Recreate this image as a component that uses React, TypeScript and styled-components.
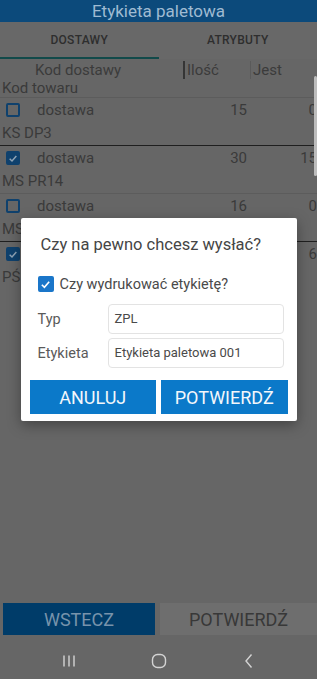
import * as React from 'react';
import styled, { createGlobalStyle } from 'styled-components';

const GlobalStyle = createGlobalStyle`
  html, body {
    margin: 0;
    padding: 0;
    background: #666666;
    font-family: Roboto, 'Noto Sans', Arial, sans-serif;
  }
  * { box-sizing: border-box; }
`;

const $Screen = styled.div`
  position: relative;
  width: 317px;
  height: 679px;
  overflow: hidden;
  display: flex;
  flex-direction: column;
  background: #666666;
  color: #3a3a3a;
`;

const $Header = styled.header`
  height: 22px;
  background: #0c4a7b;
  color: #9fbbd2;
  font-size: 17px;
  line-height: 23px;
  text-align: center;
`;

const $Tabs = styled.nav`
  display: flex;
  height: 37px;
  background: #686868;
`;

const $Tab = styled.div<{ $active?: boolean }>`
  flex: 1;
  display: flex;
  align-items: center;
  justify-content: center;
  font-size: 12px;
  font-weight: 500;
  letter-spacing: 0.3px;
  color: #2e2e2e;
  border-bottom: 2px solid ${({ $active }) => ($active ? '#124a4a' : 'transparent')};
  padding-top: 1px;
`;

const $ColumnHeader = styled.div`
  display: grid;
  grid-template-columns: 35px 148px 67px 1fr;
  height: 21px;
  align-items: center;
  font-size: 15px;
  color: #3b3b3b;
`;

const $HeadCell = styled.div<{ $sep?: 'dark' | 'light' }>`
  height: 18px;
  line-height: 18px;
  padding-left: ${({ $sep }) => ($sep ? '2px' : '0')};
  border-left: ${({ $sep }) =>
    $sep === 'dark' ? '2px solid #353535' : $sep === 'light' ? '1px solid #5a5a5a' : 'none'};
`;

const $CodeLine = styled.div<{ $compact?: boolean }>`
  height: ${({ $compact }) => ($compact ? '17px' : '23px')};
  line-height: ${({ $compact }) => ($compact ? '17px' : '23px')};
  padding-left: 2px;
  font-size: 15px;
  color: #3a3a3a;
  white-space: nowrap;
`;

const $Entry = styled.div<{ $dark?: boolean }>`
  border-top: 1px solid ${({ $dark }) => ($dark ? '#1f1f1f' : '#5c5c5c')};
`;

const $Row = styled.div`
  display: grid;
  grid-template-columns: 37px 148px 65px 1fr;
  height: 24px;
  align-items: center;
  font-size: 15px;
  color: #3a3a3a;
`;

const $Qty = styled.div`
  text-align: right;
  padding-right: 3px;
`;

const $Jest = styled.div`
  text-align: right;
`;

const $Box = styled.div<{ $checked?: boolean; $light?: boolean }>`
  width: ${({ $light }) => ($light ? '16px' : '14px')};
  height: ${({ $light }) => ($light ? '16px' : '14px')};
  margin-left: ${({ $light }) => ($light ? '0' : '6px')};
  border-radius: 2px;
  border: 2px solid ${({ $light }) => ($light ? '#1a76c9' : '#0f416d')};
  background: ${({ $checked, $light }) =>
    $checked ? ($light ? '#1a76c9' : '#0f416d') : 'transparent'};
  display: flex;
  align-items: center;
  justify-content: center;
`;

const $Scroll = styled.div`
  position: absolute;
  right: 0;
  top: 76px;
  width: 3px;
  height: 100px;
  border-radius: 2px;
  background: #bdbdbd;
`;

const $Spacer = styled.div`
  flex: 1;
`;

const $BottomBar = styled.div`
  display: flex;
  gap: 5px;
  padding: 0 0 10px 3px;
`;

const $BottomButton = styled.button<{ $primary?: boolean }>`
  flex: ${({ $primary }) => ($primary ? '0 0 152px' : '1')};
  height: 32px;
  border: none;
  font-family: inherit;
  font-size: 18px;
  background: ${({ $primary }) => ($primary ? '#003c69' : '#6e6e6e')};
  color: ${({ $primary }) => ($primary ? '#7793ab' : '#383838')};
  padding: 0;
`;

const $NavBar = styled.div`
  height: 34px;
  display: grid;
  grid-template-columns: repeat(3, 90px);
  justify-content: center;
  justify-items: center;
  align-items: center;
  padding-bottom: 2px;
`;

const $Backdrop = styled.div`
  position: absolute;
  left: 0;
  right: 0;
  top: 0;
  height: 639px;
  display: flex;
  align-items: center;
  justify-content: center;
`;

const $Dialog = styled.div`
  width: 276px;
  background: #ffffff;
  border-radius: 2px;
  box-shadow: 0 4px 14px rgba(0, 0, 0, 0.35);
  padding-bottom: 7px;
`;

const $DialogTitle = styled.h2`
  margin: 0;
  padding: 15px 10px 0 20px;
  font-size: 16.5px;
  font-weight: 400;
  line-height: 24px;
  white-space: nowrap;
  color: #454545;
`;

const $DialogBody = styled.div`
  padding: 0 13px 0 17px;
`;

const $CheckRow = styled.label`
  display: flex;
  align-items: center;
  gap: 6px;
  height: 24px;
  margin-top: 15px;
  font-size: 14.5px;
  color: #4a4a4a;
`;

const $Fields = styled.div`
  display: flex;
  flex-direction: column;
  gap: 4px;
  margin-top: 8px;
`;

const $Field = styled.div`
  display: grid;
  grid-template-columns: 70px 1fr;
  align-items: center;
`;

const $FieldLabel = styled.span`
  font-size: 14.5px;
  color: #5a5a5a;
`;

const $FieldValue = styled.div`
  height: 30px;
  border: 1px solid #e3e3e3;
  border-radius: 4px;
  padding-left: 6px;
  font-size: 13px;
  line-height: 28px;
  color: #4a4a4a;
`;

const $Actions = styled.div`
  display: flex;
  gap: 5px;
  padding: 0 9px;
  margin-top: 12px;
`;

const $DialogButton = styled.button`
  flex: 1;
  height: 34px;
  border: none;
  background: #0b79c9;
  color: #f3f7fb;
  font-family: inherit;
  font-size: 18px;
  padding: 0;
`;

function Check({ color }: { color: string }) {
  return (
    <svg width="11" height="11" viewBox="0 0 12 12">
      <path d="M2 6.3 L4.8 9 L10 3" fill="none" stroke={color} strokeWidth="1.8" />
    </svg>
  );
}

interface Delivery {
  code: string;
  qty: number;
  jest: number;
  checked: boolean;
}

const deliveries: Delivery[] = [
  { code: 'KS DP3', qty: 15, jest: 0, checked: false },
  { code: 'MS PR14', qty: 30, jest: 15, checked: true },
  { code: 'MS PR15', qty: 16, jest: 0, checked: false },
  { code: 'PŚ 01', qty: 6, jest: 6, checked: true },
];

function App() {
  return (
    <$Screen>
      <GlobalStyle />
      <$Header>Etykieta paletowa</$Header>
      <$Tabs>
        <$Tab $active>DOSTAWY</$Tab>
        <$Tab>ATRYBUTY</$Tab>
      </$Tabs>
      <$ColumnHeader>
        <div />
        <$HeadCell>Kod dostawy</$HeadCell>
        <$HeadCell $sep="dark">Ilość</$HeadCell>
        <$HeadCell $sep="light">Jest</$HeadCell>
      </$ColumnHeader>
      <$CodeLine $compact>Kod towaru</$CodeLine>
      {deliveries.map((d, idx) => (
        <$Entry key={idx} $dark={d.checked}>
          <$Row>
            <$Box $checked={d.checked}>{d.checked && <Check color="#8fa3b5" />}</$Box>
            <div>dostawa</div>
            <$Qty>{d.qty}</$Qty>
            <$Jest>{d.jest}</$Jest>
          </$Row>
          <$CodeLine>{d.code}</$CodeLine>
        </$Entry>
      ))}
      <$Scroll />
      <$Spacer />
      <$BottomBar>
        <$BottomButton $primary>WSTECZ</$BottomButton>
        <$BottomButton>POTWIERDŹ</$BottomButton>
      </$BottomBar>
      <$NavBar>
        <svg width="14" height="14" viewBox="0 0 14 14">
          <path d="M2 1.5 V12.5 M7 1.5 V12.5 M12 1.5 V12.5" stroke="#d4d4d4" strokeWidth="1.4" />
        </svg>
        <svg width="16" height="16" viewBox="0 0 16 16">
          <rect x="1.5" y="1.5" width="13" height="13" rx="5" fill="none" stroke="#d4d4d4" strokeWidth="1.4" />
        </svg>
        <svg width="12" height="16" viewBox="0 0 12 16">
          <path d="M8.5 1.5 L3 8 L8.5 14.5" fill="none" stroke="#d4d4d4" strokeWidth="1.4" />
        </svg>
      </$NavBar>

      <$Backdrop>
        <$Dialog>
          <$DialogTitle>Czy na pewno chcesz wysłać?</$DialogTitle>
          <$DialogBody>
            <$CheckRow>
              <$Box $checked $light>
                <Check color="#ffffff" />
              </$Box>
              Czy wydrukować etykietę?
            </$CheckRow>
            <$Fields>
              <$Field>
                <$FieldLabel>Typ</$FieldLabel>
                <$FieldValue>ZPL</$FieldValue>
              </$Field>
              <$Field>
                <$FieldLabel>Etykieta</$FieldLabel>
                <$FieldValue>Etykieta paletowa 001</$FieldValue>
              </$Field>
            </$Fields>
          </$DialogBody>
          <$Actions>
            <$DialogButton>ANULUJ</$DialogButton>
            <$DialogButton>POTWIERDŹ</$DialogButton>
          </$Actions>
        </$Dialog>
      </$Backdrop>
    </$Screen>
  );
}

export default App;
